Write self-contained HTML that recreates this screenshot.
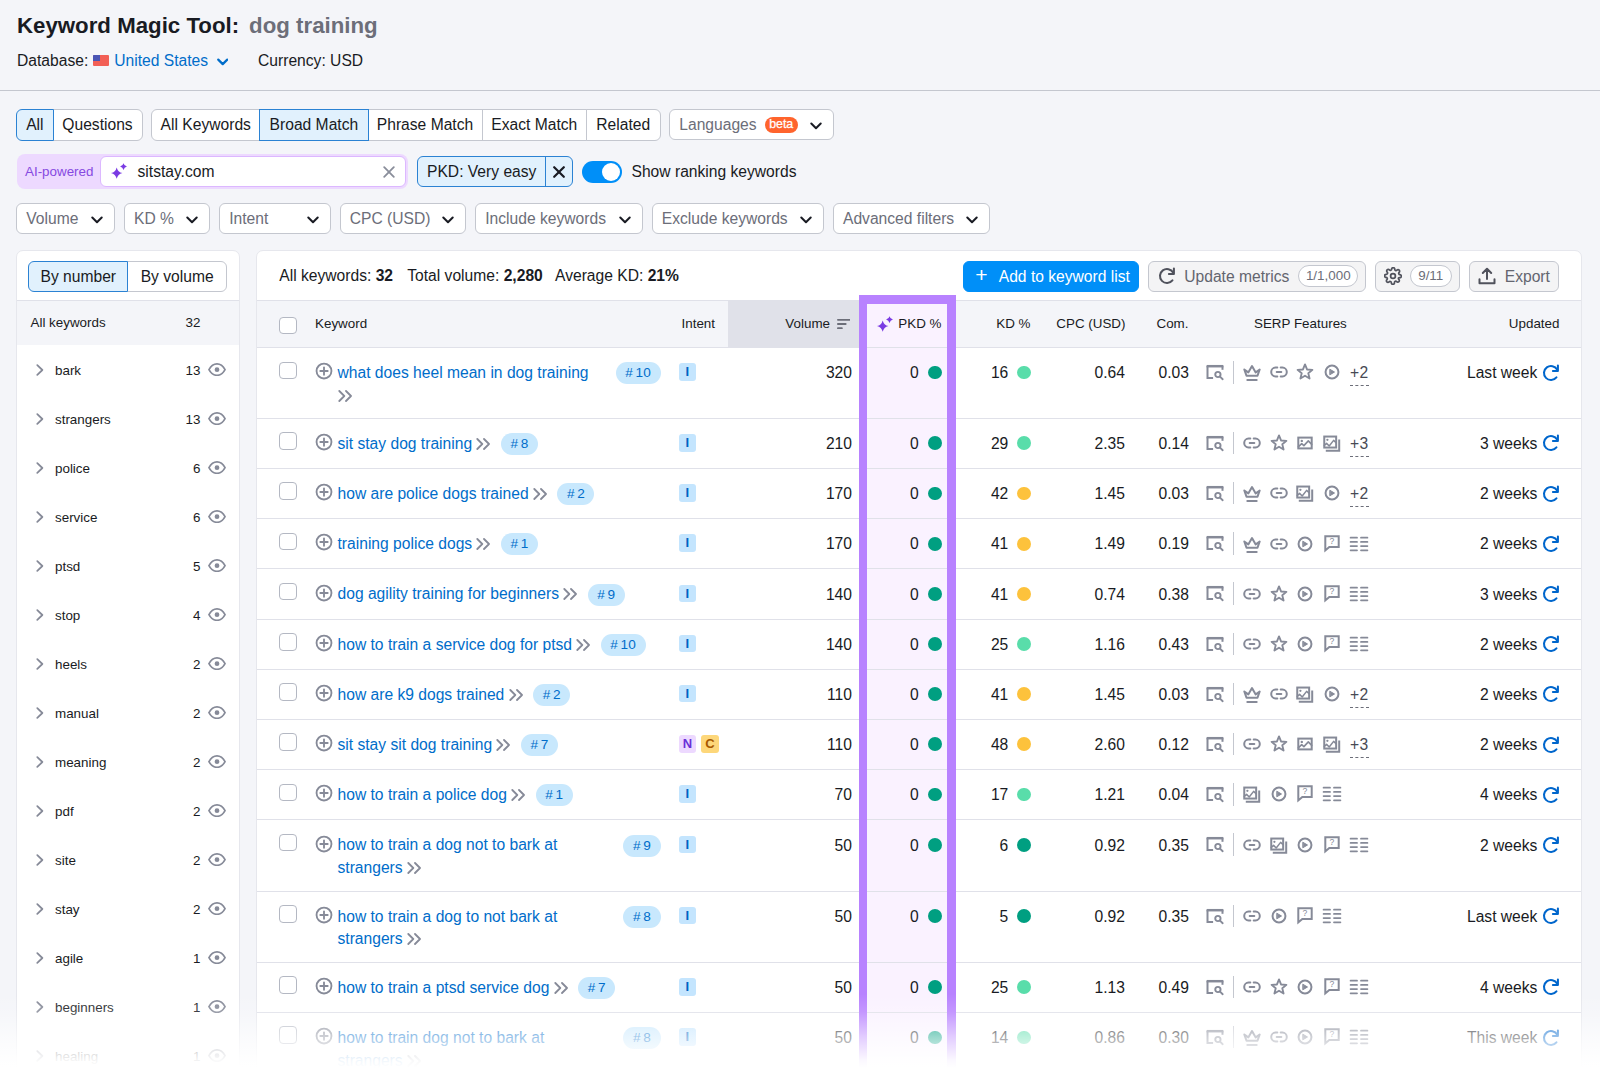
<!DOCTYPE html>
<html lang="en"><head><meta charset="utf-8"><title>Keyword Magic Tool: dog training</title>
<style>
*{box-sizing:border-box;margin:0;padding:0}
html,body{width:1600px;height:1070px;overflow:hidden}
body{background:#f4f5f9;font-family:"Liberation Sans",Arial,sans-serif;color:#191b23;font-size:15.63px;position:relative}
svg{display:block}
.abs{position:absolute}
h1{position:absolute;left:17px;top:13.25px;font-size:22.25px;line-height:26px;font-weight:700;letter-spacing:0;white-space:nowrap}
h1 span{color:#6c6e79;margin-left:10px}
.db{position:absolute;left:17px;top:50px;height:22px;line-height:22px;font-size:15.63px;white-space:nowrap;display:flex;align-items:center}
.db .flag{display:inline-block;width:16px;height:11px;margin:-1px 4.75px 0 5.25px;position:relative;background:#f25f56;border-radius:1px;overflow:hidden}
.db .flag:before{content:"";position:absolute;left:0;top:0;width:7px;height:6px;background:#4a55b5}
.db a{color:#006dca}
.db .cd{margin-left:8.5px;margin-top:1px;width:11.5px}
.db .cd path{stroke-width:2.3}
.db .cur{margin-left:30px}
.hr{position:absolute;left:0;top:90px;width:1600px;height:1px;background:#c4c7cf}
.seg{position:absolute;top:109.25px;height:31.25px;display:flex}
.seg div{height:31.25px;line-height:29.5px;text-align:center;border:1px solid #c4c7cf;background:#fff;white-space:nowrap;margin-left:-1px;position:relative}
.seg div:first-child{border-radius:6px 0 0 6px;margin-left:0}
.seg div:last-child{border-radius:0 6px 6px 0}
.seg div.on{background:#e1f1fd;border-color:#2b82d3;z-index:2}
.dd{position:absolute;height:31px;background:#fff;border:1px solid #c4c7cf;border-radius:6px;color:#6c6e79;line-height:29px;padding-left:9px;white-space:nowrap}
.dd .cd{position:absolute;right:11px;top:12px}
.ai{position:absolute;left:16.5px;top:153.75px;width:391px;height:35.25px;border-radius:8px;background:#edd9ff}
.ai .lbl{position:absolute;left:8.5px;top:0;line-height:35.5px;font-size:13.4px;color:#8649e1}
.ai .inp{position:absolute;left:83.5px;top:2.5px;width:305.5px;height:30.5px;background:#fff;border:1px solid #dcb8ff;border-radius:6px}
.ai .inp .spk{position:absolute;left:10.4px;top:5.9px}
.ai .inp .t{position:absolute;left:36.5px;top:0;line-height:29px}
.ai .inp .x{position:absolute;right:10px;top:8.5px}
.chip{position:absolute;left:417px;top:156.25px;width:156px;height:30.5px;border:1px solid #2b82d3;border-radius:6px;background:#e1f1fd;line-height:30px;padding-left:9px;white-space:nowrap}
.chip .sep{position:absolute;left:126.5px;top:0;width:1px;height:28.5px;background:#2b82d3}
.chip .x{position:absolute;left:135px;top:8.5px}
.tog{position:absolute;left:582px;top:160.5px;width:40px;height:22px;border-radius:11px;background:#008ff8}
.tog:after{content:"";position:absolute;right:2px;top:2px;width:18px;height:18px;border-radius:9px;background:#fff}
.togl{position:absolute;left:631.5px;top:160.75px;line-height:22px;white-space:nowrap}
.panel{position:absolute;top:250px;background:#fff;border:1px solid #e6e7ed;border-radius:7px 7px 0 0;height:830px;overflow:hidden}
#left{left:16px;width:223.5px}
#right{left:256px;width:1326px}
.seg2{position:absolute;left:11.25px;top:9.5px;height:31px;display:flex}
.seg2 div{height:31px;line-height:30px;text-align:center;border:1px solid #c4c7cf;background:#fff;white-space:nowrap;margin-left:-1px;position:relative;border-radius:0 6px 6px 0}
.seg2 div.on{background:#e1f1fd;border-color:#2b82d3;z-index:2;border-radius:6px 0 0 6px;margin-left:0}
.sep-h{position:absolute;left:0;right:0;top:48.5px;height:1px;background:#e0e1e9}
.allk{position:absolute;left:0;right:0;top:49.5px;height:44.5px;background:#f4f5f9;font-size:13.4px;line-height:43.5px}
.allk .a{position:absolute;left:13.5px;top:0}
.allk .b{position:absolute;right:38px;top:0}
.si{position:absolute;left:0;right:0;height:49px;font-size:13.4px;line-height:49px}
.si .chv{position:absolute;left:18.5px;top:18px}
.si .nm{position:absolute;left:38px;top:0}
.si .ct{position:absolute;right:38px;top:0}
.si .eye{position:absolute;left:190.5px;top:17.5px}
.tb{position:absolute;left:0;right:0;top:0;height:48.5px}
.tb .st{position:absolute;top:14.25px;line-height:22px;white-space:nowrap}
.btn{position:absolute;top:9.5px;height:31px;border-radius:6px;border:1px solid #c4c7cf;background:#f4f4f5;color:#63656f;white-space:nowrap;line-height:29px}
.btn.pri{background:#008ff8;border-color:#008ff8;color:#fff}
.pill{position:absolute;top:3px;height:22.5px;border:1px solid #c4c7cf;border-radius:11.5px;background:#fff;font-size:13.4px;line-height:20.5px;text-align:center;color:#6c6e79}
.th{position:absolute;left:0;right:0;top:49.5px;height:47.5px;background:#f4f5f9;border-bottom:1px solid #e0e1e9}
.thl{position:absolute;left:0;right:0;top:49.5px;height:46.5px;font-size:13.4px;line-height:46.5px}
.thl .c{position:absolute;top:0;white-space:nowrap}
.volbg{position:absolute;left:471px;top:0;width:131px;height:46.5px;background:#e0e1e9}
.pkcol{position:absolute;left:602px;top:44px;width:97px;height:800px;background:#faf2ff}
.pkcol i{position:absolute;left:0;right:0;top:52px;height:1px;background:#e0e1e9}
.cb{position:absolute;left:22.25px;width:17.5px;height:17.5px;border:1px solid #b4b8c3;border-radius:4px;background:#fff}
.tr{position:absolute;left:0;right:0;border-bottom:1px solid #e0e1e9}
.tr .cb{top:13.5px}
.tr .pc{position:absolute;left:56.6px;top:13.3px}
.kw{position:absolute;left:80.5px;top:14.1px;width:323px;display:flex;align-items:flex-start;line-height:22.75px;white-space:nowrap}
.kw a{color:#006dca}
.kw .dbl{display:inline-block;vertical-align:-1px;margin-left:0}
.pos{display:inline-block;margin-left:9.5px;margin-top:.2px;height:22px;line-height:22.5px;padding:0 9.5px;border-radius:11px;background:#c8e8fd;color:#006dca;font-size:13.6px;letter-spacing:.2px}
.pos i{display:inline-block;width:2.5px}
.pos.right{margin-left:auto}
.ints{position:absolute;left:421.6px;top:15.3px;display:flex;gap:5px}
.int{display:block;width:17.5px;height:17.5px;border-radius:3px;font-size:13px;font-weight:700;line-height:17.5px;text-align:center}
.int-I{background:#c4e5fe;color:#0062c4}
.int-N{background:#edd9ff;color:#6a30d8}
.int-C{background:#fdd77a;color:#a75800}
.num{position:absolute;top:14.3px;line-height:22.75px;text-align:right;white-space:nowrap}
.vol{right:729px} .pkd{right:662.2px} .kd{right:572.7px} .cpc{right:456px} .com{right:392px}
.dot{position:absolute;top:17.6px;width:13.8px;height:13.8px;border-radius:7px}
.sic0{position:absolute;left:948px;top:14.1px}
.vdiv{position:absolute;left:976px;top:13px;width:1px;height:22.5px;background:#c4c7cf}
.sics{position:absolute;left:981.5px;top:14.4px;height:20px;display:flex;align-items:center}
.sic{display:flex;width:26.75px;justify-content:center}
.more{align-self:flex-start;margin-left:4.5px;margin-top:-.1px;color:#484a54;line-height:22.75px;height:22.75px;position:relative;letter-spacing:.4px}
.more:after{content:"";position:absolute;left:0;right:0;top:23px;border-top:1px dashed #6c6e79}
.upd{position:absolute;right:20.4px;top:14.3px;line-height:22.75px;white-space:nowrap;display:flex;align-items:center}
.rf{margin-left:3.3px;position:relative;top:-1px}
#pk i{position:absolute;background:#b882ff}
#fade{position:absolute;left:0;top:990px;width:1600px;height:80px;background:linear-gradient(to bottom,rgba(255,255,255,0) 4px,rgba(255,255,255,.17) 22px,rgba(255,255,255,.6) 47px,rgba(255,255,255,.94) 70px,#fff 78px)}
</style></head><body>
<h1>Keyword Magic Tool:<span>dog training</span></h1>
<div class="db">Database:<span class="flag"></span><a>United States</a><svg width="12" height="8" viewBox="0 0 12 8" fill="none" class="cd"><path d="M1.3 1.5 L6 6.2 L10.7 1.5" stroke="#006dca" stroke-width="2" stroke-linecap="round" stroke-linejoin="round"/></svg><span class="cur">Currency: USD</span></div>
<div class="hr"></div>

<div class="seg" style="left:16.25px"><div class="on" style="width:37.25px">All</div><div style="width:90px">Questions</div></div>
<div class="seg" style="left:151.25px"><div style="width:109px">All Keywords</div><div class="on" style="width:109.25px">Broad Match</div><div style="width:115px">Phrase Match</div><div style="width:105.5px">Exact Match</div><div style="width:74.5px">Related</div></div>
<div class="dd" style="left:669.25px;top:109px;width:164.5px"><span>Languages</span><span class="abs" style="left:94.4px;top:7.25px;height:15.5px;line-height:15px;padding:0 4.5px;border-radius:8px;background:#ff642d;color:#fff;font-size:12.4px;-webkit-text-stroke:.25px #fff">beta</span><svg width="12" height="8" viewBox="0 0 12 8" fill="none" class="cd"><path d="M1.3 1.5 L6 6.2 L10.7 1.5" stroke="#191b23" stroke-width="2" stroke-linecap="round" stroke-linejoin="round"/></svg></div>

<div class="ai"><span class="lbl">AI-powered</span><div class="inp"><svg width="16" height="16" viewBox="0 0 16 16" fill="none" class="spk"><path d="M5.7 4.3999999999999995 Q6.84 8.959999999999999 11.4 10.1 Q6.84 11.24 5.7 15.8 Q4.5600000000000005 11.24 0.0 10.1 Q4.5600000000000005 8.959999999999999 5.7 4.3999999999999995 Z" fill="#7a3be3"/><path d="M12.5 0.20000000000000018 Q13.18 2.92 15.9 3.6 Q13.18 4.28 12.5 7.0 Q11.82 4.28 9.1 3.6 Q11.82 2.92 12.5 0.20000000000000018 Z" fill="#7a3be3"/></svg><span class="t">sitstay.com</span><span class="x"><svg width="12" height="12" viewBox="0 0 12 12" fill="none" ><path d="M1.2 1.2 L10.8 10.8 M10.8 1.2 L1.2 10.8" stroke="#8a8e9b" stroke-width="1.8" stroke-linecap="round"/></svg></span></div></div>
<div class="chip">PKD: Very easy<span class="sep"></span><span class="x"><svg width="12" height="12" viewBox="0 0 12 12" fill="none" ><path d="M1.2 1.2 L10.8 10.8 M10.8 1.2 L1.2 10.8" stroke="#191b23" stroke-width="2.2" stroke-linecap="round"/></svg></span></div>
<div class="tog"></div><div class="togl">Show ranking keywords</div>

<div style="position:absolute;left:0;top:203px">
<div class="dd" style="left:16.25px;width:98.25px"><span>Volume</span><svg width="12" height="8" viewBox="0 0 12 8" fill="none" class="cd"><path d="M1.3 1.5 L6 6.2 L10.7 1.5" stroke="#191b23" stroke-width="2" stroke-linecap="round" stroke-linejoin="round"/></svg></div><div class="dd" style="left:124px;width:86px"><span>KD %</span><svg width="12" height="8" viewBox="0 0 12 8" fill="none" class="cd"><path d="M1.3 1.5 L6 6.2 L10.7 1.5" stroke="#191b23" stroke-width="2" stroke-linecap="round" stroke-linejoin="round"/></svg></div><div class="dd" style="left:219.25px;width:111.25px"><span>Intent</span><svg width="12" height="8" viewBox="0 0 12 8" fill="none" class="cd"><path d="M1.3 1.5 L6 6.2 L10.7 1.5" stroke="#191b23" stroke-width="2" stroke-linecap="round" stroke-linejoin="round"/></svg></div><div class="dd" style="left:339.75px;width:126.5px"><span>CPC (USD)</span><svg width="12" height="8" viewBox="0 0 12 8" fill="none" class="cd"><path d="M1.3 1.5 L6 6.2 L10.7 1.5" stroke="#191b23" stroke-width="2" stroke-linecap="round" stroke-linejoin="round"/></svg></div><div class="dd" style="left:475.25px;width:167.25px"><span>Include keywords</span><svg width="12" height="8" viewBox="0 0 12 8" fill="none" class="cd"><path d="M1.3 1.5 L6 6.2 L10.7 1.5" stroke="#191b23" stroke-width="2" stroke-linecap="round" stroke-linejoin="round"/></svg></div><div class="dd" style="left:651.75px;width:172px"><span>Exclude keywords</span><svg width="12" height="8" viewBox="0 0 12 8" fill="none" class="cd"><path d="M1.3 1.5 L6 6.2 L10.7 1.5" stroke="#191b23" stroke-width="2" stroke-linecap="round" stroke-linejoin="round"/></svg></div><div class="dd" style="left:833px;width:157.25px"><span>Advanced filters</span><svg width="12" height="8" viewBox="0 0 12 8" fill="none" class="cd"><path d="M1.3 1.5 L6 6.2 L10.7 1.5" stroke="#191b23" stroke-width="2" stroke-linecap="round" stroke-linejoin="round"/></svg></div>
</div>

<div class="panel" id="left">
<div class="seg2"><div class="on" style="width:100px">By number</div><div style="width:99.75px">By volume</div></div>
<div class="sep-h"></div>
<div class="allk"><span class="a">All keywords</span><span class="b">32</span></div>
<div class="si" style="top:94.5px"><span class="chv"><svg width="8.3" height="12" viewBox="0 0 9 13" fill="none" ><path d="M1.4 1.2 L6.9 6.5 L1.4 11.8" stroke="#868a98" stroke-width="1.9" stroke-linecap="round" stroke-linejoin="round"/></svg></span><span class="nm">bark</span><span class="ct">13</span><span class="eye"><svg width="18" height="13.3" viewBox="0 0 19 14" fill="none" ><path d="M1 7 C3.2 3 6.3 1 9.5 1 C12.7 1 15.8 3 18 7 C15.8 11 12.7 13 9.5 13 C6.3 13 3.2 11 1 7 Z" stroke="#868a98" stroke-width="1.8" stroke-linejoin="round"/><circle cx="9.5" cy="7" r="2.5" fill="#868a98"/></svg></span></div>
<div class="si" style="top:143.5px"><span class="chv"><svg width="8.3" height="12" viewBox="0 0 9 13" fill="none" ><path d="M1.4 1.2 L6.9 6.5 L1.4 11.8" stroke="#868a98" stroke-width="1.9" stroke-linecap="round" stroke-linejoin="round"/></svg></span><span class="nm">strangers</span><span class="ct">13</span><span class="eye"><svg width="18" height="13.3" viewBox="0 0 19 14" fill="none" ><path d="M1 7 C3.2 3 6.3 1 9.5 1 C12.7 1 15.8 3 18 7 C15.8 11 12.7 13 9.5 13 C6.3 13 3.2 11 1 7 Z" stroke="#868a98" stroke-width="1.8" stroke-linejoin="round"/><circle cx="9.5" cy="7" r="2.5" fill="#868a98"/></svg></span></div>
<div class="si" style="top:192.5px"><span class="chv"><svg width="8.3" height="12" viewBox="0 0 9 13" fill="none" ><path d="M1.4 1.2 L6.9 6.5 L1.4 11.8" stroke="#868a98" stroke-width="1.9" stroke-linecap="round" stroke-linejoin="round"/></svg></span><span class="nm">police</span><span class="ct">6</span><span class="eye"><svg width="18" height="13.3" viewBox="0 0 19 14" fill="none" ><path d="M1 7 C3.2 3 6.3 1 9.5 1 C12.7 1 15.8 3 18 7 C15.8 11 12.7 13 9.5 13 C6.3 13 3.2 11 1 7 Z" stroke="#868a98" stroke-width="1.8" stroke-linejoin="round"/><circle cx="9.5" cy="7" r="2.5" fill="#868a98"/></svg></span></div>
<div class="si" style="top:241.5px"><span class="chv"><svg width="8.3" height="12" viewBox="0 0 9 13" fill="none" ><path d="M1.4 1.2 L6.9 6.5 L1.4 11.8" stroke="#868a98" stroke-width="1.9" stroke-linecap="round" stroke-linejoin="round"/></svg></span><span class="nm">service</span><span class="ct">6</span><span class="eye"><svg width="18" height="13.3" viewBox="0 0 19 14" fill="none" ><path d="M1 7 C3.2 3 6.3 1 9.5 1 C12.7 1 15.8 3 18 7 C15.8 11 12.7 13 9.5 13 C6.3 13 3.2 11 1 7 Z" stroke="#868a98" stroke-width="1.8" stroke-linejoin="round"/><circle cx="9.5" cy="7" r="2.5" fill="#868a98"/></svg></span></div>
<div class="si" style="top:290.5px"><span class="chv"><svg width="8.3" height="12" viewBox="0 0 9 13" fill="none" ><path d="M1.4 1.2 L6.9 6.5 L1.4 11.8" stroke="#868a98" stroke-width="1.9" stroke-linecap="round" stroke-linejoin="round"/></svg></span><span class="nm">ptsd</span><span class="ct">5</span><span class="eye"><svg width="18" height="13.3" viewBox="0 0 19 14" fill="none" ><path d="M1 7 C3.2 3 6.3 1 9.5 1 C12.7 1 15.8 3 18 7 C15.8 11 12.7 13 9.5 13 C6.3 13 3.2 11 1 7 Z" stroke="#868a98" stroke-width="1.8" stroke-linejoin="round"/><circle cx="9.5" cy="7" r="2.5" fill="#868a98"/></svg></span></div>
<div class="si" style="top:339.5px"><span class="chv"><svg width="8.3" height="12" viewBox="0 0 9 13" fill="none" ><path d="M1.4 1.2 L6.9 6.5 L1.4 11.8" stroke="#868a98" stroke-width="1.9" stroke-linecap="round" stroke-linejoin="round"/></svg></span><span class="nm">stop</span><span class="ct">4</span><span class="eye"><svg width="18" height="13.3" viewBox="0 0 19 14" fill="none" ><path d="M1 7 C3.2 3 6.3 1 9.5 1 C12.7 1 15.8 3 18 7 C15.8 11 12.7 13 9.5 13 C6.3 13 3.2 11 1 7 Z" stroke="#868a98" stroke-width="1.8" stroke-linejoin="round"/><circle cx="9.5" cy="7" r="2.5" fill="#868a98"/></svg></span></div>
<div class="si" style="top:388.5px"><span class="chv"><svg width="8.3" height="12" viewBox="0 0 9 13" fill="none" ><path d="M1.4 1.2 L6.9 6.5 L1.4 11.8" stroke="#868a98" stroke-width="1.9" stroke-linecap="round" stroke-linejoin="round"/></svg></span><span class="nm">heels</span><span class="ct">2</span><span class="eye"><svg width="18" height="13.3" viewBox="0 0 19 14" fill="none" ><path d="M1 7 C3.2 3 6.3 1 9.5 1 C12.7 1 15.8 3 18 7 C15.8 11 12.7 13 9.5 13 C6.3 13 3.2 11 1 7 Z" stroke="#868a98" stroke-width="1.8" stroke-linejoin="round"/><circle cx="9.5" cy="7" r="2.5" fill="#868a98"/></svg></span></div>
<div class="si" style="top:437.5px"><span class="chv"><svg width="8.3" height="12" viewBox="0 0 9 13" fill="none" ><path d="M1.4 1.2 L6.9 6.5 L1.4 11.8" stroke="#868a98" stroke-width="1.9" stroke-linecap="round" stroke-linejoin="round"/></svg></span><span class="nm">manual</span><span class="ct">2</span><span class="eye"><svg width="18" height="13.3" viewBox="0 0 19 14" fill="none" ><path d="M1 7 C3.2 3 6.3 1 9.5 1 C12.7 1 15.8 3 18 7 C15.8 11 12.7 13 9.5 13 C6.3 13 3.2 11 1 7 Z" stroke="#868a98" stroke-width="1.8" stroke-linejoin="round"/><circle cx="9.5" cy="7" r="2.5" fill="#868a98"/></svg></span></div>
<div class="si" style="top:486.5px"><span class="chv"><svg width="8.3" height="12" viewBox="0 0 9 13" fill="none" ><path d="M1.4 1.2 L6.9 6.5 L1.4 11.8" stroke="#868a98" stroke-width="1.9" stroke-linecap="round" stroke-linejoin="round"/></svg></span><span class="nm">meaning</span><span class="ct">2</span><span class="eye"><svg width="18" height="13.3" viewBox="0 0 19 14" fill="none" ><path d="M1 7 C3.2 3 6.3 1 9.5 1 C12.7 1 15.8 3 18 7 C15.8 11 12.7 13 9.5 13 C6.3 13 3.2 11 1 7 Z" stroke="#868a98" stroke-width="1.8" stroke-linejoin="round"/><circle cx="9.5" cy="7" r="2.5" fill="#868a98"/></svg></span></div>
<div class="si" style="top:535.5px"><span class="chv"><svg width="8.3" height="12" viewBox="0 0 9 13" fill="none" ><path d="M1.4 1.2 L6.9 6.5 L1.4 11.8" stroke="#868a98" stroke-width="1.9" stroke-linecap="round" stroke-linejoin="round"/></svg></span><span class="nm">pdf</span><span class="ct">2</span><span class="eye"><svg width="18" height="13.3" viewBox="0 0 19 14" fill="none" ><path d="M1 7 C3.2 3 6.3 1 9.5 1 C12.7 1 15.8 3 18 7 C15.8 11 12.7 13 9.5 13 C6.3 13 3.2 11 1 7 Z" stroke="#868a98" stroke-width="1.8" stroke-linejoin="round"/><circle cx="9.5" cy="7" r="2.5" fill="#868a98"/></svg></span></div>
<div class="si" style="top:584.5px"><span class="chv"><svg width="8.3" height="12" viewBox="0 0 9 13" fill="none" ><path d="M1.4 1.2 L6.9 6.5 L1.4 11.8" stroke="#868a98" stroke-width="1.9" stroke-linecap="round" stroke-linejoin="round"/></svg></span><span class="nm">site</span><span class="ct">2</span><span class="eye"><svg width="18" height="13.3" viewBox="0 0 19 14" fill="none" ><path d="M1 7 C3.2 3 6.3 1 9.5 1 C12.7 1 15.8 3 18 7 C15.8 11 12.7 13 9.5 13 C6.3 13 3.2 11 1 7 Z" stroke="#868a98" stroke-width="1.8" stroke-linejoin="round"/><circle cx="9.5" cy="7" r="2.5" fill="#868a98"/></svg></span></div>
<div class="si" style="top:633.5px"><span class="chv"><svg width="8.3" height="12" viewBox="0 0 9 13" fill="none" ><path d="M1.4 1.2 L6.9 6.5 L1.4 11.8" stroke="#868a98" stroke-width="1.9" stroke-linecap="round" stroke-linejoin="round"/></svg></span><span class="nm">stay</span><span class="ct">2</span><span class="eye"><svg width="18" height="13.3" viewBox="0 0 19 14" fill="none" ><path d="M1 7 C3.2 3 6.3 1 9.5 1 C12.7 1 15.8 3 18 7 C15.8 11 12.7 13 9.5 13 C6.3 13 3.2 11 1 7 Z" stroke="#868a98" stroke-width="1.8" stroke-linejoin="round"/><circle cx="9.5" cy="7" r="2.5" fill="#868a98"/></svg></span></div>
<div class="si" style="top:682.5px"><span class="chv"><svg width="8.3" height="12" viewBox="0 0 9 13" fill="none" ><path d="M1.4 1.2 L6.9 6.5 L1.4 11.8" stroke="#868a98" stroke-width="1.9" stroke-linecap="round" stroke-linejoin="round"/></svg></span><span class="nm">agile</span><span class="ct">1</span><span class="eye"><svg width="18" height="13.3" viewBox="0 0 19 14" fill="none" ><path d="M1 7 C3.2 3 6.3 1 9.5 1 C12.7 1 15.8 3 18 7 C15.8 11 12.7 13 9.5 13 C6.3 13 3.2 11 1 7 Z" stroke="#868a98" stroke-width="1.8" stroke-linejoin="round"/><circle cx="9.5" cy="7" r="2.5" fill="#868a98"/></svg></span></div>
<div class="si" style="top:731.5px"><span class="chv"><svg width="8.3" height="12" viewBox="0 0 9 13" fill="none" ><path d="M1.4 1.2 L6.9 6.5 L1.4 11.8" stroke="#868a98" stroke-width="1.9" stroke-linecap="round" stroke-linejoin="round"/></svg></span><span class="nm">beginners</span><span class="ct">1</span><span class="eye"><svg width="18" height="13.3" viewBox="0 0 19 14" fill="none" ><path d="M1 7 C3.2 3 6.3 1 9.5 1 C12.7 1 15.8 3 18 7 C15.8 11 12.7 13 9.5 13 C6.3 13 3.2 11 1 7 Z" stroke="#868a98" stroke-width="1.8" stroke-linejoin="round"/><circle cx="9.5" cy="7" r="2.5" fill="#868a98"/></svg></span></div>
<div class="si" style="top:780.5px"><span class="chv"><svg width="8.3" height="12" viewBox="0 0 9 13" fill="none" ><path d="M1.4 1.2 L6.9 6.5 L1.4 11.8" stroke="#868a98" stroke-width="1.9" stroke-linecap="round" stroke-linejoin="round"/></svg></span><span class="nm">healing</span><span class="ct">1</span><span class="eye"><svg width="18" height="13.3" viewBox="0 0 19 14" fill="none" ><path d="M1 7 C3.2 3 6.3 1 9.5 1 C12.7 1 15.8 3 18 7 C15.8 11 12.7 13 9.5 13 C6.3 13 3.2 11 1 7 Z" stroke="#868a98" stroke-width="1.8" stroke-linejoin="round"/><circle cx="9.5" cy="7" r="2.5" fill="#868a98"/></svg></span></div>
</div>

<div class="panel" id="right">
<div class="tb">
<span class="st" style="left:22.25px">All keywords: <b>32</b></span>
<span class="st" style="left:150.25px">Total volume: <b>2,280</b></span>
<span class="st" style="left:298px">Average KD: <b>21%</b></span>
<div class="btn pri" style="left:706.25px;width:176px"><span class="abs" style="left:11px;top:-1.5px;font-size:21px;font-weight:400">+</span><span class="abs" style="left:34.5px">Add to keyword list</span></div>
<div class="btn" style="left:891.25px;width:217.5px"><span class="abs" style="left:7.25px;top:4.25px"><svg width="20" height="20" viewBox="-10 -10 20 20" fill="none" stroke="#50525c" stroke-width="2.05" stroke-linecap="round" stroke-linejoin="round"><path d="M5.44 4.4 A7 7 0 1 1 6.1 -3.4"/><path d="M6.9 -7.5 V-2.1 H1.9"/></svg></span><span class="abs" style="left:35px">Update metrics</span><span class="pill" style="left:149px;width:60px">1/1,000</span></div>
<div class="btn" style="left:1118px;width:84.5px"><span class="abs" style="left:7.75px;top:5.5px"><svg width="18" height="18" viewBox="0 0 24 24" fill="none"><path d="M12 15.2a3.2 3.2 0 1 0 0-6.400a3.2 3.2 0 0 0 0 6.400z" stroke="#50525c" stroke-width="2.3"/><path d="M19.4 14.6a1.700 1.700 0 0 0 .34 1.870l.06.06a2.060 2.060 0 1 1-2.910 2.910l-.06-.06a1.700 1.700 0 0 0-1.870-.34 1.700 1.700 0 0 0-1.030 1.550V21a2.060 2.060 0 1 1-4.110 0v-.09a1.700 1.700 0 0 0-1.110-1.550 1.700 1.700 0 0 0-1.870.34l-.06.06a2.060 2.060 0 1 1-2.910-2.910l.06-.06a1.700 1.700 0 0 0 .34-1.870 1.700 1.700 0 0 0-1.550-1.030H3a2.060 2.060 0 1 1 0-4.110h.09a1.700 1.700 0 0 0 1.550-1.110 1.700 1.700 0 0 0-.34-1.870l-.06-.06a2.060 2.060 0 1 1 2.910-2.910l.06.06a1.700 1.700 0 0 0 1.870.34h.08a1.700 1.700 0 0 0 1.030-1.550V3a2.060 2.060 0 1 1 4.110 0v.09a1.700 1.700 0 0 0 1.030 1.550 1.700 1.700 0 0 0 1.870-.34l.06-.06a2.060 2.060 0 1 1 2.910 2.910l-.06.06a1.700 1.700 0 0 0-.34 1.870v.08a1.700 1.700 0 0 0 1.550 1.030H21a2.060 2.060 0 1 1 0 4.110h-.09a1.700 1.700 0 0 0-1.550 1.030z" stroke="#50525c" stroke-width="2.3" stroke-linejoin="round"/></svg></span><span class="pill" style="left:34px;width:41.5px">9/11</span></div>
<div class="btn" style="left:1212.25px;width:90px"><span class="abs" style="left:8px;top:5px"><svg width="18" height="18" viewBox="0 0 18 18" fill="none" ><path d="M1.5 12.2 V16.2 H16.5 V12.2" stroke="#50525c" stroke-width="2" stroke-linejoin="round" stroke-linecap="round"/><path d="M9 12 V2 M4.8 6 L9 1.8 L13.2 6" stroke="#50525c" stroke-width="2" stroke-linejoin="round" stroke-linecap="round"/></svg></span><span class="abs" style="left:34.5px">Export</span></div>
</div>
<div class="sep-h"></div>
<div class="th"><div class="volbg"></div></div>
<div class="pkcol"><i></i></div>
<div class="thl">
<span class="cb" style="top:16.25px"></span>
<span class="c" style="left:58px">Keyword</span>
<span class="c" style="left:424.5px">Intent</span>
<span class="c" style="right:751px">Volume</span><span class="abs" style="left:579.6px;top:17.5px"><svg width="13.6" height="12" viewBox="0 0 15 12" fill="none" ><path d="M1 1.4 H14 M1 6 H9.6 M1 10.6 H5.4" stroke="#6c6e79" stroke-width="2" stroke-linecap="round"/></svg></span>
<span class="c" style="right:639.5px">PKD %</span><span class="abs" style="left:619.5px;top:15.5px"><svg width="16" height="16" viewBox="0 0 16 16" fill="none" class="spk"><path d="M5.7 4.3999999999999995 Q6.84 8.959999999999999 11.4 10.1 Q6.84 11.24 5.7 15.8 Q4.5600000000000005 11.24 0.0 10.1 Q4.5600000000000005 8.959999999999999 5.7 4.3999999999999995 Z" fill="#7a3be3"/><path d="M12.5 0.20000000000000018 Q13.18 2.92 15.9 3.6 Q13.18 4.28 12.5 7.0 Q11.82 4.28 9.1 3.6 Q11.82 2.92 12.5 0.20000000000000018 Z" fill="#7a3be3"/></svg></span>
<span class="c" style="right:550.5px">KD %</span>
<span class="c" style="right:455.5px">CPC (USD)</span>
<span class="c" style="right:392.5px">Com.</span>
<span class="c" style="left:997px">SERP Features</span>
<span class="c" style="right:21.5px">Updated</span>
</div>
<div class="tr" style="top:97.0px;height:70.75px">
<span class="cb"></span><span class="pc"><svg width="20" height="20" viewBox="-10 -10 20 20" fill="none" stroke="#868a98" stroke-width="2.0" stroke-linecap="round" stroke-linejoin="round"><circle cx="0" cy="0" r="7.45" stroke-width="1.85"/><path d="M0 -3.7 V3.7 M-3.7 0 H3.7" stroke-width="1.85"/></svg></span>
<div class="kw"><a>what does heel mean in dog training<br><svg width="15" height="12" viewBox="0 0 15 12" fill="none" class="dbl"><path d="M1.3 1 L6.3 6 L1.3 11 M8 1 L13 6 L8 11" stroke="#868a98" stroke-width="1.8" stroke-linecap="round" stroke-linejoin="round"/></svg></a><span class="pos right">#<i></i>10</span></div>
<div class="ints"><span class="int int-I">I</span></div>
<div class="num vol">320</div>
<div class="num pkd">0</div><span class="dot" style="left:671px;background:#009f81"></span>
<div class="num kd">16</div><span class="dot" style="left:759.75px;background:#59ddaa"></span>
<div class="num cpc">0.64</div>
<div class="num com">0.03</div>
<span class="sic0"><svg width="20" height="20" viewBox="-10 -10 20 20" fill="none" stroke="#868a98" stroke-width="2.0" stroke-linecap="round" stroke-linejoin="round"><path d="M-8.4 -5.8 H8.4" stroke-width="2.5" stroke-linecap="butt"/><path d="M-7.5 -5.9 V6 H-1.9" stroke-linecap="butt" stroke-linejoin="miter"/><path d="M7.5 -5.9 V-2.2" stroke-linecap="butt"/><circle cx="2.9" cy="2.5" r="2.65" stroke-width="1.9"/><path d="M5 4.6 L7.7 7.2" stroke-width="1.9"/></svg></span><span class="vdiv"></span>
<div class="sics"><span class="sic"><svg width="20" height="20" viewBox="-10 -10 20 20" fill="none" stroke="#868a98" stroke-width="2.0" stroke-linecap="round" stroke-linejoin="round"><path d="M-7.7 -2.5 L-3.7 0.4 L0 -6 L3.7 0.4 L7.7 -2.5 L5.5 3.7 H-5.5 Z"/><path d="M-4.7 7.9 H4.7"/></svg></span><span class="sic"><svg width="20" height="20" viewBox="-10 -10 20 20" fill="none" stroke="#868a98" stroke-width="2.0" stroke-linecap="round" stroke-linejoin="round"><path d="M-1.7 -4.4 H-3.4 A4.4 4.4 0 0 0 -3.4 4.4 H-1.7 M1.7 -4.4 H3.4 A4.4 4.4 0 0 1 3.4 4.4 H1.7 M-2.3 0 H2.3"/></svg></span><span class="sic"><svg width="20" height="20" viewBox="-10 -10 20 20" fill="none" stroke="#868a98" stroke-width="2.0" stroke-linecap="round" stroke-linejoin="round"><path d="M0.00 -7.55 L2.03 -2.54 L7.42 -2.16 L3.28 1.32 L4.58 6.56 L0.00 3.70 L-4.58 6.56 L-3.28 1.32 L-7.42 -2.16 L-2.03 -2.54 Z" stroke-width="1.85"/></svg></span><span class="sic"><svg width="20" height="20" viewBox="-10 -10 20 20" fill="none" stroke="#868a98" stroke-width="2.0" stroke-linecap="round" stroke-linejoin="round"><circle cx="0" cy="0" r="6.45"/><path d="M-1.9 -2.6 L2.5 0 L-1.9 2.6 Z" fill="#868a98" stroke-width="1"/></svg></span><span class="more">+2</span></div>
<div class="upd">Last week<span class="rf"><svg width="20" height="20" viewBox="-10 -10 20 20" fill="none" stroke="#0066cc" stroke-width="2.05" stroke-linecap="round" stroke-linejoin="round"><path d="M5.44 4.4 A7 7 0 1 1 6.1 -3.4"/><path d="M6.9 -7.5 V-2.1 H1.9"/></svg></span></div>
</div>
<div class="tr" style="top:167.75px;height:50.19px">
<span class="cb"></span><span class="pc"><svg width="20" height="20" viewBox="-10 -10 20 20" fill="none" stroke="#868a98" stroke-width="2.0" stroke-linecap="round" stroke-linejoin="round"><circle cx="0" cy="0" r="7.45" stroke-width="1.85"/><path d="M0 -3.7 V3.7 M-3.7 0 H3.7" stroke-width="1.85"/></svg></span>
<div class="kw"><a>sit stay dog training <svg width="15" height="12" viewBox="0 0 15 12" fill="none" class="dbl"><path d="M1.3 1 L6.3 6 L1.3 11 M8 1 L13 6 L8 11" stroke="#868a98" stroke-width="1.8" stroke-linecap="round" stroke-linejoin="round"/></svg></a><span class="pos">#<i></i>8</span></div>
<div class="ints"><span class="int int-I">I</span></div>
<div class="num vol">210</div>
<div class="num pkd">0</div><span class="dot" style="left:671px;background:#009f81"></span>
<div class="num kd">29</div><span class="dot" style="left:759.75px;background:#59ddaa"></span>
<div class="num cpc">2.35</div>
<div class="num com">0.14</div>
<span class="sic0"><svg width="20" height="20" viewBox="-10 -10 20 20" fill="none" stroke="#868a98" stroke-width="2.0" stroke-linecap="round" stroke-linejoin="round"><path d="M-8.4 -5.8 H8.4" stroke-width="2.5" stroke-linecap="butt"/><path d="M-7.5 -5.9 V6 H-1.9" stroke-linecap="butt" stroke-linejoin="miter"/><path d="M7.5 -5.9 V-2.2" stroke-linecap="butt"/><circle cx="2.9" cy="2.5" r="2.65" stroke-width="1.9"/><path d="M5 4.6 L7.7 7.2" stroke-width="1.9"/></svg></span><span class="vdiv"></span>
<div class="sics"><span class="sic"><svg width="20" height="20" viewBox="-10 -10 20 20" fill="none" stroke="#868a98" stroke-width="2.0" stroke-linecap="round" stroke-linejoin="round"><path d="M-1.7 -4.4 H-3.4 A4.4 4.4 0 0 0 -3.4 4.4 H-1.7 M1.7 -4.4 H3.4 A4.4 4.4 0 0 1 3.4 4.4 H1.7 M-2.3 0 H2.3"/></svg></span><span class="sic"><svg width="20" height="20" viewBox="-10 -10 20 20" fill="none" stroke="#868a98" stroke-width="2.0" stroke-linecap="round" stroke-linejoin="round"><path d="M0.00 -7.55 L2.03 -2.54 L7.42 -2.16 L3.28 1.32 L4.58 6.56 L0.00 3.70 L-4.58 6.56 L-3.28 1.32 L-7.42 -2.16 L-2.03 -2.54 Z" stroke-width="1.85"/></svg></span><span class="sic"><svg width="20" height="20" viewBox="-10 -10 20 20" fill="none" stroke="#868a98" stroke-width="2.0" stroke-linecap="round" stroke-linejoin="round"><rect x="-6.7" y="-5.4" width="13.4" height="10.8" stroke-linejoin="miter"/><circle cx="-3.2" cy="-2.1" r="1.2" fill="#868a98" stroke="none"/><path d="M-6.7 3.8 L-3.3 0.6 L-1.1 2.6 L3.3 -2.1 L6.7 1.4" stroke-width="1.6"/></svg></span><span class="sic"><svg width="20" height="20" viewBox="-10 -10 20 20" fill="none" stroke="#868a98" stroke-width="2.0" stroke-linecap="round" stroke-linejoin="round"><g transform="translate(0 0.8)"><rect x="-7.75" y="-7.25" width="11.9" height="11" stroke-linejoin="miter"/><path d="M7.2 -4.3 V6.9 H-6.2" stroke-linecap="butt" stroke-linejoin="miter"/><circle cx="-4.6" cy="-4" r="1.15" fill="#868a98" stroke="none"/><path d="M-7.7 1.6 L-5.4 -0.4 L-2.8 2.2 L1.6 -3.4 L4.1 -1.2" stroke-width="1.5"/></g></svg></span><span class="more">+3</span></div>
<div class="upd">3 weeks<span class="rf"><svg width="20" height="20" viewBox="-10 -10 20 20" fill="none" stroke="#0066cc" stroke-width="2.05" stroke-linecap="round" stroke-linejoin="round"><path d="M5.44 4.4 A7 7 0 1 1 6.1 -3.4"/><path d="M6.9 -7.5 V-2.1 H1.9"/></svg></span></div>
</div>
<div class="tr" style="top:217.94px;height:50.19px">
<span class="cb"></span><span class="pc"><svg width="20" height="20" viewBox="-10 -10 20 20" fill="none" stroke="#868a98" stroke-width="2.0" stroke-linecap="round" stroke-linejoin="round"><circle cx="0" cy="0" r="7.45" stroke-width="1.85"/><path d="M0 -3.7 V3.7 M-3.7 0 H3.7" stroke-width="1.85"/></svg></span>
<div class="kw"><a>how are police dogs trained <svg width="15" height="12" viewBox="0 0 15 12" fill="none" class="dbl"><path d="M1.3 1 L6.3 6 L1.3 11 M8 1 L13 6 L8 11" stroke="#868a98" stroke-width="1.8" stroke-linecap="round" stroke-linejoin="round"/></svg></a><span class="pos">#<i></i>2</span></div>
<div class="ints"><span class="int int-I">I</span></div>
<div class="num vol">170</div>
<div class="num pkd">0</div><span class="dot" style="left:671px;background:#009f81"></span>
<div class="num kd">42</div><span class="dot" style="left:759.75px;background:#fdc23c"></span>
<div class="num cpc">1.45</div>
<div class="num com">0.03</div>
<span class="sic0"><svg width="20" height="20" viewBox="-10 -10 20 20" fill="none" stroke="#868a98" stroke-width="2.0" stroke-linecap="round" stroke-linejoin="round"><path d="M-8.4 -5.8 H8.4" stroke-width="2.5" stroke-linecap="butt"/><path d="M-7.5 -5.9 V6 H-1.9" stroke-linecap="butt" stroke-linejoin="miter"/><path d="M7.5 -5.9 V-2.2" stroke-linecap="butt"/><circle cx="2.9" cy="2.5" r="2.65" stroke-width="1.9"/><path d="M5 4.6 L7.7 7.2" stroke-width="1.9"/></svg></span><span class="vdiv"></span>
<div class="sics"><span class="sic"><svg width="20" height="20" viewBox="-10 -10 20 20" fill="none" stroke="#868a98" stroke-width="2.0" stroke-linecap="round" stroke-linejoin="round"><path d="M-7.7 -2.5 L-3.7 0.4 L0 -6 L3.7 0.4 L7.7 -2.5 L5.5 3.7 H-5.5 Z"/><path d="M-4.7 7.9 H4.7"/></svg></span><span class="sic"><svg width="20" height="20" viewBox="-10 -10 20 20" fill="none" stroke="#868a98" stroke-width="2.0" stroke-linecap="round" stroke-linejoin="round"><path d="M-1.7 -4.4 H-3.4 A4.4 4.4 0 0 0 -3.4 4.4 H-1.7 M1.7 -4.4 H3.4 A4.4 4.4 0 0 1 3.4 4.4 H1.7 M-2.3 0 H2.3"/></svg></span><span class="sic"><svg width="20" height="20" viewBox="-10 -10 20 20" fill="none" stroke="#868a98" stroke-width="2.0" stroke-linecap="round" stroke-linejoin="round"><g transform="translate(0 0.8)"><rect x="-7.75" y="-7.25" width="11.9" height="11" stroke-linejoin="miter"/><path d="M7.2 -4.3 V6.9 H-6.2" stroke-linecap="butt" stroke-linejoin="miter"/><circle cx="-4.6" cy="-4" r="1.15" fill="#868a98" stroke="none"/><path d="M-7.7 1.6 L-5.4 -0.4 L-2.8 2.2 L1.6 -3.4 L4.1 -1.2" stroke-width="1.5"/></g></svg></span><span class="sic"><svg width="20" height="20" viewBox="-10 -10 20 20" fill="none" stroke="#868a98" stroke-width="2.0" stroke-linecap="round" stroke-linejoin="round"><circle cx="0" cy="0" r="6.45"/><path d="M-1.9 -2.6 L2.5 0 L-1.9 2.6 Z" fill="#868a98" stroke-width="1"/></svg></span><span class="more">+2</span></div>
<div class="upd">2 weeks<span class="rf"><svg width="20" height="20" viewBox="-10 -10 20 20" fill="none" stroke="#0066cc" stroke-width="2.05" stroke-linecap="round" stroke-linejoin="round"><path d="M5.44 4.4 A7 7 0 1 1 6.1 -3.4"/><path d="M6.9 -7.5 V-2.1 H1.9"/></svg></span></div>
</div>
<div class="tr" style="top:268.13px;height:50.19px">
<span class="cb"></span><span class="pc"><svg width="20" height="20" viewBox="-10 -10 20 20" fill="none" stroke="#868a98" stroke-width="2.0" stroke-linecap="round" stroke-linejoin="round"><circle cx="0" cy="0" r="7.45" stroke-width="1.85"/><path d="M0 -3.7 V3.7 M-3.7 0 H3.7" stroke-width="1.85"/></svg></span>
<div class="kw"><a>training police dogs <svg width="15" height="12" viewBox="0 0 15 12" fill="none" class="dbl"><path d="M1.3 1 L6.3 6 L1.3 11 M8 1 L13 6 L8 11" stroke="#868a98" stroke-width="1.8" stroke-linecap="round" stroke-linejoin="round"/></svg></a><span class="pos">#<i></i>1</span></div>
<div class="ints"><span class="int int-I">I</span></div>
<div class="num vol">170</div>
<div class="num pkd">0</div><span class="dot" style="left:671px;background:#009f81"></span>
<div class="num kd">41</div><span class="dot" style="left:759.75px;background:#fdc23c"></span>
<div class="num cpc">1.49</div>
<div class="num com">0.19</div>
<span class="sic0"><svg width="20" height="20" viewBox="-10 -10 20 20" fill="none" stroke="#868a98" stroke-width="2.0" stroke-linecap="round" stroke-linejoin="round"><path d="M-8.4 -5.8 H8.4" stroke-width="2.5" stroke-linecap="butt"/><path d="M-7.5 -5.9 V6 H-1.9" stroke-linecap="butt" stroke-linejoin="miter"/><path d="M7.5 -5.9 V-2.2" stroke-linecap="butt"/><circle cx="2.9" cy="2.5" r="2.65" stroke-width="1.9"/><path d="M5 4.6 L7.7 7.2" stroke-width="1.9"/></svg></span><span class="vdiv"></span>
<div class="sics"><span class="sic"><svg width="20" height="20" viewBox="-10 -10 20 20" fill="none" stroke="#868a98" stroke-width="2.0" stroke-linecap="round" stroke-linejoin="round"><path d="M-7.7 -2.5 L-3.7 0.4 L0 -6 L3.7 0.4 L7.7 -2.5 L5.5 3.7 H-5.5 Z"/><path d="M-4.7 7.9 H4.7"/></svg></span><span class="sic"><svg width="20" height="20" viewBox="-10 -10 20 20" fill="none" stroke="#868a98" stroke-width="2.0" stroke-linecap="round" stroke-linejoin="round"><path d="M-1.7 -4.4 H-3.4 A4.4 4.4 0 0 0 -3.4 4.4 H-1.7 M1.7 -4.4 H3.4 A4.4 4.4 0 0 1 3.4 4.4 H1.7 M-2.3 0 H2.3"/></svg></span><span class="sic"><svg width="20" height="20" viewBox="-10 -10 20 20" fill="none" stroke="#868a98" stroke-width="2.0" stroke-linecap="round" stroke-linejoin="round"><circle cx="0" cy="0" r="6.45"/><path d="M-1.9 -2.6 L2.5 0 L-1.9 2.6 Z" fill="#868a98" stroke-width="1"/></svg></span><span class="sic"><svg width="20" height="20" viewBox="-10 -10 20 20" fill="none" stroke="#868a98" stroke-width="2.0" stroke-linecap="round" stroke-linejoin="round"><path d="M-6.7 -7.85 H6.7 V2.95 H-2.7 L-6.7 6.4 Z" stroke-linejoin="miter"/><text x="0" y="0.4" font-family="Liberation Sans, sans-serif" font-size="8.6" fill="#868a98" stroke="none" text-anchor="middle">?</text></svg></span><span class="sic"><svg width="20" height="20" viewBox="-10 -10 20 20" fill="none" stroke="#868a98" stroke-width="1.8" stroke-linecap="round" stroke-linejoin="round"><path d="M-8.4 -6.3 H-2 M2 -6.3 H8.4"/><path d="M-8.4 -2.1 H-2 M2 -2.1 H8.4"/><path d="M-8.4 2.1 H-2 M2 2.1 H8.4"/><path d="M-8.4 6.3 H-2 M2 6.3 H8.4"/></svg></span></div>
<div class="upd">2 weeks<span class="rf"><svg width="20" height="20" viewBox="-10 -10 20 20" fill="none" stroke="#0066cc" stroke-width="2.05" stroke-linecap="round" stroke-linejoin="round"><path d="M5.44 4.4 A7 7 0 1 1 6.1 -3.4"/><path d="M6.9 -7.5 V-2.1 H1.9"/></svg></span></div>
</div>
<div class="tr" style="top:318.32px;height:50.19px">
<span class="cb"></span><span class="pc"><svg width="20" height="20" viewBox="-10 -10 20 20" fill="none" stroke="#868a98" stroke-width="2.0" stroke-linecap="round" stroke-linejoin="round"><circle cx="0" cy="0" r="7.45" stroke-width="1.85"/><path d="M0 -3.7 V3.7 M-3.7 0 H3.7" stroke-width="1.85"/></svg></span>
<div class="kw"><a>dog agility training for beginners <svg width="15" height="12" viewBox="0 0 15 12" fill="none" class="dbl"><path d="M1.3 1 L6.3 6 L1.3 11 M8 1 L13 6 L8 11" stroke="#868a98" stroke-width="1.8" stroke-linecap="round" stroke-linejoin="round"/></svg></a><span class="pos">#<i></i>9</span></div>
<div class="ints"><span class="int int-I">I</span></div>
<div class="num vol">140</div>
<div class="num pkd">0</div><span class="dot" style="left:671px;background:#009f81"></span>
<div class="num kd">41</div><span class="dot" style="left:759.75px;background:#fdc23c"></span>
<div class="num cpc">0.74</div>
<div class="num com">0.38</div>
<span class="sic0"><svg width="20" height="20" viewBox="-10 -10 20 20" fill="none" stroke="#868a98" stroke-width="2.0" stroke-linecap="round" stroke-linejoin="round"><path d="M-8.4 -5.8 H8.4" stroke-width="2.5" stroke-linecap="butt"/><path d="M-7.5 -5.9 V6 H-1.9" stroke-linecap="butt" stroke-linejoin="miter"/><path d="M7.5 -5.9 V-2.2" stroke-linecap="butt"/><circle cx="2.9" cy="2.5" r="2.65" stroke-width="1.9"/><path d="M5 4.6 L7.7 7.2" stroke-width="1.9"/></svg></span><span class="vdiv"></span>
<div class="sics"><span class="sic"><svg width="20" height="20" viewBox="-10 -10 20 20" fill="none" stroke="#868a98" stroke-width="2.0" stroke-linecap="round" stroke-linejoin="round"><path d="M-1.7 -4.4 H-3.4 A4.4 4.4 0 0 0 -3.4 4.4 H-1.7 M1.7 -4.4 H3.4 A4.4 4.4 0 0 1 3.4 4.4 H1.7 M-2.3 0 H2.3"/></svg></span><span class="sic"><svg width="20" height="20" viewBox="-10 -10 20 20" fill="none" stroke="#868a98" stroke-width="2.0" stroke-linecap="round" stroke-linejoin="round"><path d="M0.00 -7.55 L2.03 -2.54 L7.42 -2.16 L3.28 1.32 L4.58 6.56 L0.00 3.70 L-4.58 6.56 L-3.28 1.32 L-7.42 -2.16 L-2.03 -2.54 Z" stroke-width="1.85"/></svg></span><span class="sic"><svg width="20" height="20" viewBox="-10 -10 20 20" fill="none" stroke="#868a98" stroke-width="2.0" stroke-linecap="round" stroke-linejoin="round"><circle cx="0" cy="0" r="6.45"/><path d="M-1.9 -2.6 L2.5 0 L-1.9 2.6 Z" fill="#868a98" stroke-width="1"/></svg></span><span class="sic"><svg width="20" height="20" viewBox="-10 -10 20 20" fill="none" stroke="#868a98" stroke-width="2.0" stroke-linecap="round" stroke-linejoin="round"><path d="M-6.7 -7.85 H6.7 V2.95 H-2.7 L-6.7 6.4 Z" stroke-linejoin="miter"/><text x="0" y="0.4" font-family="Liberation Sans, sans-serif" font-size="8.6" fill="#868a98" stroke="none" text-anchor="middle">?</text></svg></span><span class="sic"><svg width="20" height="20" viewBox="-10 -10 20 20" fill="none" stroke="#868a98" stroke-width="1.8" stroke-linecap="round" stroke-linejoin="round"><path d="M-8.4 -6.3 H-2 M2 -6.3 H8.4"/><path d="M-8.4 -2.1 H-2 M2 -2.1 H8.4"/><path d="M-8.4 2.1 H-2 M2 2.1 H8.4"/><path d="M-8.4 6.3 H-2 M2 6.3 H8.4"/></svg></span></div>
<div class="upd">3 weeks<span class="rf"><svg width="20" height="20" viewBox="-10 -10 20 20" fill="none" stroke="#0066cc" stroke-width="2.05" stroke-linecap="round" stroke-linejoin="round"><path d="M5.44 4.4 A7 7 0 1 1 6.1 -3.4"/><path d="M6.9 -7.5 V-2.1 H1.9"/></svg></span></div>
</div>
<div class="tr" style="top:368.51px;height:50.19px">
<span class="cb"></span><span class="pc"><svg width="20" height="20" viewBox="-10 -10 20 20" fill="none" stroke="#868a98" stroke-width="2.0" stroke-linecap="round" stroke-linejoin="round"><circle cx="0" cy="0" r="7.45" stroke-width="1.85"/><path d="M0 -3.7 V3.7 M-3.7 0 H3.7" stroke-width="1.85"/></svg></span>
<div class="kw"><a>how to train a service dog for ptsd <svg width="15" height="12" viewBox="0 0 15 12" fill="none" class="dbl"><path d="M1.3 1 L6.3 6 L1.3 11 M8 1 L13 6 L8 11" stroke="#868a98" stroke-width="1.8" stroke-linecap="round" stroke-linejoin="round"/></svg></a><span class="pos">#<i></i>10</span></div>
<div class="ints"><span class="int int-I">I</span></div>
<div class="num vol">140</div>
<div class="num pkd">0</div><span class="dot" style="left:671px;background:#009f81"></span>
<div class="num kd">25</div><span class="dot" style="left:759.75px;background:#59ddaa"></span>
<div class="num cpc">1.16</div>
<div class="num com">0.43</div>
<span class="sic0"><svg width="20" height="20" viewBox="-10 -10 20 20" fill="none" stroke="#868a98" stroke-width="2.0" stroke-linecap="round" stroke-linejoin="round"><path d="M-8.4 -5.8 H8.4" stroke-width="2.5" stroke-linecap="butt"/><path d="M-7.5 -5.9 V6 H-1.9" stroke-linecap="butt" stroke-linejoin="miter"/><path d="M7.5 -5.9 V-2.2" stroke-linecap="butt"/><circle cx="2.9" cy="2.5" r="2.65" stroke-width="1.9"/><path d="M5 4.6 L7.7 7.2" stroke-width="1.9"/></svg></span><span class="vdiv"></span>
<div class="sics"><span class="sic"><svg width="20" height="20" viewBox="-10 -10 20 20" fill="none" stroke="#868a98" stroke-width="2.0" stroke-linecap="round" stroke-linejoin="round"><path d="M-1.7 -4.4 H-3.4 A4.4 4.4 0 0 0 -3.4 4.4 H-1.7 M1.7 -4.4 H3.4 A4.4 4.4 0 0 1 3.4 4.4 H1.7 M-2.3 0 H2.3"/></svg></span><span class="sic"><svg width="20" height="20" viewBox="-10 -10 20 20" fill="none" stroke="#868a98" stroke-width="2.0" stroke-linecap="round" stroke-linejoin="round"><path d="M0.00 -7.55 L2.03 -2.54 L7.42 -2.16 L3.28 1.32 L4.58 6.56 L0.00 3.70 L-4.58 6.56 L-3.28 1.32 L-7.42 -2.16 L-2.03 -2.54 Z" stroke-width="1.85"/></svg></span><span class="sic"><svg width="20" height="20" viewBox="-10 -10 20 20" fill="none" stroke="#868a98" stroke-width="2.0" stroke-linecap="round" stroke-linejoin="round"><circle cx="0" cy="0" r="6.45"/><path d="M-1.9 -2.6 L2.5 0 L-1.9 2.6 Z" fill="#868a98" stroke-width="1"/></svg></span><span class="sic"><svg width="20" height="20" viewBox="-10 -10 20 20" fill="none" stroke="#868a98" stroke-width="2.0" stroke-linecap="round" stroke-linejoin="round"><path d="M-6.7 -7.85 H6.7 V2.95 H-2.7 L-6.7 6.4 Z" stroke-linejoin="miter"/><text x="0" y="0.4" font-family="Liberation Sans, sans-serif" font-size="8.6" fill="#868a98" stroke="none" text-anchor="middle">?</text></svg></span><span class="sic"><svg width="20" height="20" viewBox="-10 -10 20 20" fill="none" stroke="#868a98" stroke-width="1.8" stroke-linecap="round" stroke-linejoin="round"><path d="M-8.4 -6.3 H-2 M2 -6.3 H8.4"/><path d="M-8.4 -2.1 H-2 M2 -2.1 H8.4"/><path d="M-8.4 2.1 H-2 M2 2.1 H8.4"/><path d="M-8.4 6.3 H-2 M2 6.3 H8.4"/></svg></span></div>
<div class="upd">2 weeks<span class="rf"><svg width="20" height="20" viewBox="-10 -10 20 20" fill="none" stroke="#0066cc" stroke-width="2.05" stroke-linecap="round" stroke-linejoin="round"><path d="M5.44 4.4 A7 7 0 1 1 6.1 -3.4"/><path d="M6.9 -7.5 V-2.1 H1.9"/></svg></span></div>
</div>
<div class="tr" style="top:418.7px;height:50.19px">
<span class="cb"></span><span class="pc"><svg width="20" height="20" viewBox="-10 -10 20 20" fill="none" stroke="#868a98" stroke-width="2.0" stroke-linecap="round" stroke-linejoin="round"><circle cx="0" cy="0" r="7.45" stroke-width="1.85"/><path d="M0 -3.7 V3.7 M-3.7 0 H3.7" stroke-width="1.85"/></svg></span>
<div class="kw"><a>how are k9 dogs trained <svg width="15" height="12" viewBox="0 0 15 12" fill="none" class="dbl"><path d="M1.3 1 L6.3 6 L1.3 11 M8 1 L13 6 L8 11" stroke="#868a98" stroke-width="1.8" stroke-linecap="round" stroke-linejoin="round"/></svg></a><span class="pos">#<i></i>2</span></div>
<div class="ints"><span class="int int-I">I</span></div>
<div class="num vol">110</div>
<div class="num pkd">0</div><span class="dot" style="left:671px;background:#009f81"></span>
<div class="num kd">41</div><span class="dot" style="left:759.75px;background:#fdc23c"></span>
<div class="num cpc">1.45</div>
<div class="num com">0.03</div>
<span class="sic0"><svg width="20" height="20" viewBox="-10 -10 20 20" fill="none" stroke="#868a98" stroke-width="2.0" stroke-linecap="round" stroke-linejoin="round"><path d="M-8.4 -5.8 H8.4" stroke-width="2.5" stroke-linecap="butt"/><path d="M-7.5 -5.9 V6 H-1.9" stroke-linecap="butt" stroke-linejoin="miter"/><path d="M7.5 -5.9 V-2.2" stroke-linecap="butt"/><circle cx="2.9" cy="2.5" r="2.65" stroke-width="1.9"/><path d="M5 4.6 L7.7 7.2" stroke-width="1.9"/></svg></span><span class="vdiv"></span>
<div class="sics"><span class="sic"><svg width="20" height="20" viewBox="-10 -10 20 20" fill="none" stroke="#868a98" stroke-width="2.0" stroke-linecap="round" stroke-linejoin="round"><path d="M-7.7 -2.5 L-3.7 0.4 L0 -6 L3.7 0.4 L7.7 -2.5 L5.5 3.7 H-5.5 Z"/><path d="M-4.7 7.9 H4.7"/></svg></span><span class="sic"><svg width="20" height="20" viewBox="-10 -10 20 20" fill="none" stroke="#868a98" stroke-width="2.0" stroke-linecap="round" stroke-linejoin="round"><path d="M-1.7 -4.4 H-3.4 A4.4 4.4 0 0 0 -3.4 4.4 H-1.7 M1.7 -4.4 H3.4 A4.4 4.4 0 0 1 3.4 4.4 H1.7 M-2.3 0 H2.3"/></svg></span><span class="sic"><svg width="20" height="20" viewBox="-10 -10 20 20" fill="none" stroke="#868a98" stroke-width="2.0" stroke-linecap="round" stroke-linejoin="round"><g transform="translate(0 0.8)"><rect x="-7.75" y="-7.25" width="11.9" height="11" stroke-linejoin="miter"/><path d="M7.2 -4.3 V6.9 H-6.2" stroke-linecap="butt" stroke-linejoin="miter"/><circle cx="-4.6" cy="-4" r="1.15" fill="#868a98" stroke="none"/><path d="M-7.7 1.6 L-5.4 -0.4 L-2.8 2.2 L1.6 -3.4 L4.1 -1.2" stroke-width="1.5"/></g></svg></span><span class="sic"><svg width="20" height="20" viewBox="-10 -10 20 20" fill="none" stroke="#868a98" stroke-width="2.0" stroke-linecap="round" stroke-linejoin="round"><circle cx="0" cy="0" r="6.45"/><path d="M-1.9 -2.6 L2.5 0 L-1.9 2.6 Z" fill="#868a98" stroke-width="1"/></svg></span><span class="more">+2</span></div>
<div class="upd">2 weeks<span class="rf"><svg width="20" height="20" viewBox="-10 -10 20 20" fill="none" stroke="#0066cc" stroke-width="2.05" stroke-linecap="round" stroke-linejoin="round"><path d="M5.44 4.4 A7 7 0 1 1 6.1 -3.4"/><path d="M6.9 -7.5 V-2.1 H1.9"/></svg></span></div>
</div>
<div class="tr" style="top:468.89px;height:50.19px">
<span class="cb"></span><span class="pc"><svg width="20" height="20" viewBox="-10 -10 20 20" fill="none" stroke="#868a98" stroke-width="2.0" stroke-linecap="round" stroke-linejoin="round"><circle cx="0" cy="0" r="7.45" stroke-width="1.85"/><path d="M0 -3.7 V3.7 M-3.7 0 H3.7" stroke-width="1.85"/></svg></span>
<div class="kw"><a>sit stay sit dog training <svg width="15" height="12" viewBox="0 0 15 12" fill="none" class="dbl"><path d="M1.3 1 L6.3 6 L1.3 11 M8 1 L13 6 L8 11" stroke="#868a98" stroke-width="1.8" stroke-linecap="round" stroke-linejoin="round"/></svg></a><span class="pos">#<i></i>7</span></div>
<div class="ints"><span class="int int-N">N</span><span class="int int-C">C</span></div>
<div class="num vol">110</div>
<div class="num pkd">0</div><span class="dot" style="left:671px;background:#009f81"></span>
<div class="num kd">48</div><span class="dot" style="left:759.75px;background:#fdc23c"></span>
<div class="num cpc">2.60</div>
<div class="num com">0.12</div>
<span class="sic0"><svg width="20" height="20" viewBox="-10 -10 20 20" fill="none" stroke="#868a98" stroke-width="2.0" stroke-linecap="round" stroke-linejoin="round"><path d="M-8.4 -5.8 H8.4" stroke-width="2.5" stroke-linecap="butt"/><path d="M-7.5 -5.9 V6 H-1.9" stroke-linecap="butt" stroke-linejoin="miter"/><path d="M7.5 -5.9 V-2.2" stroke-linecap="butt"/><circle cx="2.9" cy="2.5" r="2.65" stroke-width="1.9"/><path d="M5 4.6 L7.7 7.2" stroke-width="1.9"/></svg></span><span class="vdiv"></span>
<div class="sics"><span class="sic"><svg width="20" height="20" viewBox="-10 -10 20 20" fill="none" stroke="#868a98" stroke-width="2.0" stroke-linecap="round" stroke-linejoin="round"><path d="M-1.7 -4.4 H-3.4 A4.4 4.4 0 0 0 -3.4 4.4 H-1.7 M1.7 -4.4 H3.4 A4.4 4.4 0 0 1 3.4 4.4 H1.7 M-2.3 0 H2.3"/></svg></span><span class="sic"><svg width="20" height="20" viewBox="-10 -10 20 20" fill="none" stroke="#868a98" stroke-width="2.0" stroke-linecap="round" stroke-linejoin="round"><path d="M0.00 -7.55 L2.03 -2.54 L7.42 -2.16 L3.28 1.32 L4.58 6.56 L0.00 3.70 L-4.58 6.56 L-3.28 1.32 L-7.42 -2.16 L-2.03 -2.54 Z" stroke-width="1.85"/></svg></span><span class="sic"><svg width="20" height="20" viewBox="-10 -10 20 20" fill="none" stroke="#868a98" stroke-width="2.0" stroke-linecap="round" stroke-linejoin="round"><rect x="-6.7" y="-5.4" width="13.4" height="10.8" stroke-linejoin="miter"/><circle cx="-3.2" cy="-2.1" r="1.2" fill="#868a98" stroke="none"/><path d="M-6.7 3.8 L-3.3 0.6 L-1.1 2.6 L3.3 -2.1 L6.7 1.4" stroke-width="1.6"/></svg></span><span class="sic"><svg width="20" height="20" viewBox="-10 -10 20 20" fill="none" stroke="#868a98" stroke-width="2.0" stroke-linecap="round" stroke-linejoin="round"><g transform="translate(0 0.8)"><rect x="-7.75" y="-7.25" width="11.9" height="11" stroke-linejoin="miter"/><path d="M7.2 -4.3 V6.9 H-6.2" stroke-linecap="butt" stroke-linejoin="miter"/><circle cx="-4.6" cy="-4" r="1.15" fill="#868a98" stroke="none"/><path d="M-7.7 1.6 L-5.4 -0.4 L-2.8 2.2 L1.6 -3.4 L4.1 -1.2" stroke-width="1.5"/></g></svg></span><span class="more">+3</span></div>
<div class="upd">2 weeks<span class="rf"><svg width="20" height="20" viewBox="-10 -10 20 20" fill="none" stroke="#0066cc" stroke-width="2.05" stroke-linecap="round" stroke-linejoin="round"><path d="M5.44 4.4 A7 7 0 1 1 6.1 -3.4"/><path d="M6.9 -7.5 V-2.1 H1.9"/></svg></span></div>
</div>
<div class="tr" style="top:519.08px;height:50.19px">
<span class="cb"></span><span class="pc"><svg width="20" height="20" viewBox="-10 -10 20 20" fill="none" stroke="#868a98" stroke-width="2.0" stroke-linecap="round" stroke-linejoin="round"><circle cx="0" cy="0" r="7.45" stroke-width="1.85"/><path d="M0 -3.7 V3.7 M-3.7 0 H3.7" stroke-width="1.85"/></svg></span>
<div class="kw"><a>how to train a police dog <svg width="15" height="12" viewBox="0 0 15 12" fill="none" class="dbl"><path d="M1.3 1 L6.3 6 L1.3 11 M8 1 L13 6 L8 11" stroke="#868a98" stroke-width="1.8" stroke-linecap="round" stroke-linejoin="round"/></svg></a><span class="pos">#<i></i>1</span></div>
<div class="ints"><span class="int int-I">I</span></div>
<div class="num vol">70</div>
<div class="num pkd">0</div><span class="dot" style="left:671px;background:#009f81"></span>
<div class="num kd">17</div><span class="dot" style="left:759.75px;background:#59ddaa"></span>
<div class="num cpc">1.21</div>
<div class="num com">0.04</div>
<span class="sic0"><svg width="20" height="20" viewBox="-10 -10 20 20" fill="none" stroke="#868a98" stroke-width="2.0" stroke-linecap="round" stroke-linejoin="round"><path d="M-8.4 -5.8 H8.4" stroke-width="2.5" stroke-linecap="butt"/><path d="M-7.5 -5.9 V6 H-1.9" stroke-linecap="butt" stroke-linejoin="miter"/><path d="M7.5 -5.9 V-2.2" stroke-linecap="butt"/><circle cx="2.9" cy="2.5" r="2.65" stroke-width="1.9"/><path d="M5 4.6 L7.7 7.2" stroke-width="1.9"/></svg></span><span class="vdiv"></span>
<div class="sics"><span class="sic"><svg width="20" height="20" viewBox="-10 -10 20 20" fill="none" stroke="#868a98" stroke-width="2.0" stroke-linecap="round" stroke-linejoin="round"><g transform="translate(0 0.8)"><rect x="-7.75" y="-7.25" width="11.9" height="11" stroke-linejoin="miter"/><path d="M7.2 -4.3 V6.9 H-6.2" stroke-linecap="butt" stroke-linejoin="miter"/><circle cx="-4.6" cy="-4" r="1.15" fill="#868a98" stroke="none"/><path d="M-7.7 1.6 L-5.4 -0.4 L-2.8 2.2 L1.6 -3.4 L4.1 -1.2" stroke-width="1.5"/></g></svg></span><span class="sic"><svg width="20" height="20" viewBox="-10 -10 20 20" fill="none" stroke="#868a98" stroke-width="2.0" stroke-linecap="round" stroke-linejoin="round"><circle cx="0" cy="0" r="6.45"/><path d="M-1.9 -2.6 L2.5 0 L-1.9 2.6 Z" fill="#868a98" stroke-width="1"/></svg></span><span class="sic"><svg width="20" height="20" viewBox="-10 -10 20 20" fill="none" stroke="#868a98" stroke-width="2.0" stroke-linecap="round" stroke-linejoin="round"><path d="M-6.7 -7.85 H6.7 V2.95 H-2.7 L-6.7 6.4 Z" stroke-linejoin="miter"/><text x="0" y="0.4" font-family="Liberation Sans, sans-serif" font-size="8.6" fill="#868a98" stroke="none" text-anchor="middle">?</text></svg></span><span class="sic"><svg width="20" height="20" viewBox="-10 -10 20 20" fill="none" stroke="#868a98" stroke-width="1.8" stroke-linecap="round" stroke-linejoin="round"><path d="M-8.4 -6.3 H-2 M2 -6.3 H8.4"/><path d="M-8.4 -2.1 H-2 M2 -2.1 H8.4"/><path d="M-8.4 2.1 H-2 M2 2.1 H8.4"/><path d="M-8.4 6.3 H-2 M2 6.3 H8.4"/></svg></span></div>
<div class="upd">4 weeks<span class="rf"><svg width="20" height="20" viewBox="-10 -10 20 20" fill="none" stroke="#0066cc" stroke-width="2.05" stroke-linecap="round" stroke-linejoin="round"><path d="M5.44 4.4 A7 7 0 1 1 6.1 -3.4"/><path d="M6.9 -7.5 V-2.1 H1.9"/></svg></span></div>
</div>
<div class="tr" style="top:569.27px;height:71.25px">
<span class="cb"></span><span class="pc"><svg width="20" height="20" viewBox="-10 -10 20 20" fill="none" stroke="#868a98" stroke-width="2.0" stroke-linecap="round" stroke-linejoin="round"><circle cx="0" cy="0" r="7.45" stroke-width="1.85"/><path d="M0 -3.7 V3.7 M-3.7 0 H3.7" stroke-width="1.85"/></svg></span>
<div class="kw"><a>how to train a dog not to bark at<br>strangers <svg width="15" height="12" viewBox="0 0 15 12" fill="none" class="dbl"><path d="M1.3 1 L6.3 6 L1.3 11 M8 1 L13 6 L8 11" stroke="#868a98" stroke-width="1.8" stroke-linecap="round" stroke-linejoin="round"/></svg></a><span class="pos right">#<i></i>9</span></div>
<div class="ints"><span class="int int-I">I</span></div>
<div class="num vol">50</div>
<div class="num pkd">0</div><span class="dot" style="left:671px;background:#009f81"></span>
<div class="num kd">6</div><span class="dot" style="left:759.75px;background:#009f81"></span>
<div class="num cpc">0.92</div>
<div class="num com">0.35</div>
<span class="sic0"><svg width="20" height="20" viewBox="-10 -10 20 20" fill="none" stroke="#868a98" stroke-width="2.0" stroke-linecap="round" stroke-linejoin="round"><path d="M-8.4 -5.8 H8.4" stroke-width="2.5" stroke-linecap="butt"/><path d="M-7.5 -5.9 V6 H-1.9" stroke-linecap="butt" stroke-linejoin="miter"/><path d="M7.5 -5.9 V-2.2" stroke-linecap="butt"/><circle cx="2.9" cy="2.5" r="2.65" stroke-width="1.9"/><path d="M5 4.6 L7.7 7.2" stroke-width="1.9"/></svg></span><span class="vdiv"></span>
<div class="sics"><span class="sic"><svg width="20" height="20" viewBox="-10 -10 20 20" fill="none" stroke="#868a98" stroke-width="2.0" stroke-linecap="round" stroke-linejoin="round"><path d="M-1.7 -4.4 H-3.4 A4.4 4.4 0 0 0 -3.4 4.4 H-1.7 M1.7 -4.4 H3.4 A4.4 4.4 0 0 1 3.4 4.4 H1.7 M-2.3 0 H2.3"/></svg></span><span class="sic"><svg width="20" height="20" viewBox="-10 -10 20 20" fill="none" stroke="#868a98" stroke-width="2.0" stroke-linecap="round" stroke-linejoin="round"><g transform="translate(0 0.8)"><rect x="-7.75" y="-7.25" width="11.9" height="11" stroke-linejoin="miter"/><path d="M7.2 -4.3 V6.9 H-6.2" stroke-linecap="butt" stroke-linejoin="miter"/><circle cx="-4.6" cy="-4" r="1.15" fill="#868a98" stroke="none"/><path d="M-7.7 1.6 L-5.4 -0.4 L-2.8 2.2 L1.6 -3.4 L4.1 -1.2" stroke-width="1.5"/></g></svg></span><span class="sic"><svg width="20" height="20" viewBox="-10 -10 20 20" fill="none" stroke="#868a98" stroke-width="2.0" stroke-linecap="round" stroke-linejoin="round"><circle cx="0" cy="0" r="6.45"/><path d="M-1.9 -2.6 L2.5 0 L-1.9 2.6 Z" fill="#868a98" stroke-width="1"/></svg></span><span class="sic"><svg width="20" height="20" viewBox="-10 -10 20 20" fill="none" stroke="#868a98" stroke-width="2.0" stroke-linecap="round" stroke-linejoin="round"><path d="M-6.7 -7.85 H6.7 V2.95 H-2.7 L-6.7 6.4 Z" stroke-linejoin="miter"/><text x="0" y="0.4" font-family="Liberation Sans, sans-serif" font-size="8.6" fill="#868a98" stroke="none" text-anchor="middle">?</text></svg></span><span class="sic"><svg width="20" height="20" viewBox="-10 -10 20 20" fill="none" stroke="#868a98" stroke-width="1.8" stroke-linecap="round" stroke-linejoin="round"><path d="M-8.4 -6.3 H-2 M2 -6.3 H8.4"/><path d="M-8.4 -2.1 H-2 M2 -2.1 H8.4"/><path d="M-8.4 2.1 H-2 M2 2.1 H8.4"/><path d="M-8.4 6.3 H-2 M2 6.3 H8.4"/></svg></span></div>
<div class="upd">2 weeks<span class="rf"><svg width="20" height="20" viewBox="-10 -10 20 20" fill="none" stroke="#0066cc" stroke-width="2.05" stroke-linecap="round" stroke-linejoin="round"><path d="M5.44 4.4 A7 7 0 1 1 6.1 -3.4"/><path d="M6.9 -7.5 V-2.1 H1.9"/></svg></span></div>
</div>
<div class="tr" style="top:640.52px;height:71.25px">
<span class="cb"></span><span class="pc"><svg width="20" height="20" viewBox="-10 -10 20 20" fill="none" stroke="#868a98" stroke-width="2.0" stroke-linecap="round" stroke-linejoin="round"><circle cx="0" cy="0" r="7.45" stroke-width="1.85"/><path d="M0 -3.7 V3.7 M-3.7 0 H3.7" stroke-width="1.85"/></svg></span>
<div class="kw"><a>how to train a dog to not bark at<br>strangers <svg width="15" height="12" viewBox="0 0 15 12" fill="none" class="dbl"><path d="M1.3 1 L6.3 6 L1.3 11 M8 1 L13 6 L8 11" stroke="#868a98" stroke-width="1.8" stroke-linecap="round" stroke-linejoin="round"/></svg></a><span class="pos right">#<i></i>8</span></div>
<div class="ints"><span class="int int-I">I</span></div>
<div class="num vol">50</div>
<div class="num pkd">0</div><span class="dot" style="left:671px;background:#009f81"></span>
<div class="num kd">5</div><span class="dot" style="left:759.75px;background:#009f81"></span>
<div class="num cpc">0.92</div>
<div class="num com">0.35</div>
<span class="sic0"><svg width="20" height="20" viewBox="-10 -10 20 20" fill="none" stroke="#868a98" stroke-width="2.0" stroke-linecap="round" stroke-linejoin="round"><path d="M-8.4 -5.8 H8.4" stroke-width="2.5" stroke-linecap="butt"/><path d="M-7.5 -5.9 V6 H-1.9" stroke-linecap="butt" stroke-linejoin="miter"/><path d="M7.5 -5.9 V-2.2" stroke-linecap="butt"/><circle cx="2.9" cy="2.5" r="2.65" stroke-width="1.9"/><path d="M5 4.6 L7.7 7.2" stroke-width="1.9"/></svg></span><span class="vdiv"></span>
<div class="sics"><span class="sic"><svg width="20" height="20" viewBox="-10 -10 20 20" fill="none" stroke="#868a98" stroke-width="2.0" stroke-linecap="round" stroke-linejoin="round"><path d="M-1.7 -4.4 H-3.4 A4.4 4.4 0 0 0 -3.4 4.4 H-1.7 M1.7 -4.4 H3.4 A4.4 4.4 0 0 1 3.4 4.4 H1.7 M-2.3 0 H2.3"/></svg></span><span class="sic"><svg width="20" height="20" viewBox="-10 -10 20 20" fill="none" stroke="#868a98" stroke-width="2.0" stroke-linecap="round" stroke-linejoin="round"><circle cx="0" cy="0" r="6.45"/><path d="M-1.9 -2.6 L2.5 0 L-1.9 2.6 Z" fill="#868a98" stroke-width="1"/></svg></span><span class="sic"><svg width="20" height="20" viewBox="-10 -10 20 20" fill="none" stroke="#868a98" stroke-width="2.0" stroke-linecap="round" stroke-linejoin="round"><path d="M-6.7 -7.85 H6.7 V2.95 H-2.7 L-6.7 6.4 Z" stroke-linejoin="miter"/><text x="0" y="0.4" font-family="Liberation Sans, sans-serif" font-size="8.6" fill="#868a98" stroke="none" text-anchor="middle">?</text></svg></span><span class="sic"><svg width="20" height="20" viewBox="-10 -10 20 20" fill="none" stroke="#868a98" stroke-width="1.8" stroke-linecap="round" stroke-linejoin="round"><path d="M-8.4 -6.3 H-2 M2 -6.3 H8.4"/><path d="M-8.4 -2.1 H-2 M2 -2.1 H8.4"/><path d="M-8.4 2.1 H-2 M2 2.1 H8.4"/><path d="M-8.4 6.3 H-2 M2 6.3 H8.4"/></svg></span></div>
<div class="upd">Last week<span class="rf"><svg width="20" height="20" viewBox="-10 -10 20 20" fill="none" stroke="#0066cc" stroke-width="2.05" stroke-linecap="round" stroke-linejoin="round"><path d="M5.44 4.4 A7 7 0 1 1 6.1 -3.4"/><path d="M6.9 -7.5 V-2.1 H1.9"/></svg></span></div>
</div>
<div class="tr" style="top:711.77px;height:50.19px">
<span class="cb"></span><span class="pc"><svg width="20" height="20" viewBox="-10 -10 20 20" fill="none" stroke="#868a98" stroke-width="2.0" stroke-linecap="round" stroke-linejoin="round"><circle cx="0" cy="0" r="7.45" stroke-width="1.85"/><path d="M0 -3.7 V3.7 M-3.7 0 H3.7" stroke-width="1.85"/></svg></span>
<div class="kw"><a>how to train a ptsd service dog <svg width="15" height="12" viewBox="0 0 15 12" fill="none" class="dbl"><path d="M1.3 1 L6.3 6 L1.3 11 M8 1 L13 6 L8 11" stroke="#868a98" stroke-width="1.8" stroke-linecap="round" stroke-linejoin="round"/></svg></a><span class="pos">#<i></i>7</span></div>
<div class="ints"><span class="int int-I">I</span></div>
<div class="num vol">50</div>
<div class="num pkd">0</div><span class="dot" style="left:671px;background:#009f81"></span>
<div class="num kd">25</div><span class="dot" style="left:759.75px;background:#59ddaa"></span>
<div class="num cpc">1.13</div>
<div class="num com">0.49</div>
<span class="sic0"><svg width="20" height="20" viewBox="-10 -10 20 20" fill="none" stroke="#868a98" stroke-width="2.0" stroke-linecap="round" stroke-linejoin="round"><path d="M-8.4 -5.8 H8.4" stroke-width="2.5" stroke-linecap="butt"/><path d="M-7.5 -5.9 V6 H-1.9" stroke-linecap="butt" stroke-linejoin="miter"/><path d="M7.5 -5.9 V-2.2" stroke-linecap="butt"/><circle cx="2.9" cy="2.5" r="2.65" stroke-width="1.9"/><path d="M5 4.6 L7.7 7.2" stroke-width="1.9"/></svg></span><span class="vdiv"></span>
<div class="sics"><span class="sic"><svg width="20" height="20" viewBox="-10 -10 20 20" fill="none" stroke="#868a98" stroke-width="2.0" stroke-linecap="round" stroke-linejoin="round"><path d="M-1.7 -4.4 H-3.4 A4.4 4.4 0 0 0 -3.4 4.4 H-1.7 M1.7 -4.4 H3.4 A4.4 4.4 0 0 1 3.4 4.4 H1.7 M-2.3 0 H2.3"/></svg></span><span class="sic"><svg width="20" height="20" viewBox="-10 -10 20 20" fill="none" stroke="#868a98" stroke-width="2.0" stroke-linecap="round" stroke-linejoin="round"><path d="M0.00 -7.55 L2.03 -2.54 L7.42 -2.16 L3.28 1.32 L4.58 6.56 L0.00 3.70 L-4.58 6.56 L-3.28 1.32 L-7.42 -2.16 L-2.03 -2.54 Z" stroke-width="1.85"/></svg></span><span class="sic"><svg width="20" height="20" viewBox="-10 -10 20 20" fill="none" stroke="#868a98" stroke-width="2.0" stroke-linecap="round" stroke-linejoin="round"><circle cx="0" cy="0" r="6.45"/><path d="M-1.9 -2.6 L2.5 0 L-1.9 2.6 Z" fill="#868a98" stroke-width="1"/></svg></span><span class="sic"><svg width="20" height="20" viewBox="-10 -10 20 20" fill="none" stroke="#868a98" stroke-width="2.0" stroke-linecap="round" stroke-linejoin="round"><path d="M-6.7 -7.85 H6.7 V2.95 H-2.7 L-6.7 6.4 Z" stroke-linejoin="miter"/><text x="0" y="0.4" font-family="Liberation Sans, sans-serif" font-size="8.6" fill="#868a98" stroke="none" text-anchor="middle">?</text></svg></span><span class="sic"><svg width="20" height="20" viewBox="-10 -10 20 20" fill="none" stroke="#868a98" stroke-width="1.8" stroke-linecap="round" stroke-linejoin="round"><path d="M-8.4 -6.3 H-2 M2 -6.3 H8.4"/><path d="M-8.4 -2.1 H-2 M2 -2.1 H8.4"/><path d="M-8.4 2.1 H-2 M2 2.1 H8.4"/><path d="M-8.4 6.3 H-2 M2 6.3 H8.4"/></svg></span></div>
<div class="upd">4 weeks<span class="rf"><svg width="20" height="20" viewBox="-10 -10 20 20" fill="none" stroke="#0066cc" stroke-width="2.05" stroke-linecap="round" stroke-linejoin="round"><path d="M5.44 4.4 A7 7 0 1 1 6.1 -3.4"/><path d="M6.9 -7.5 V-2.1 H1.9"/></svg></span></div>
</div>
<div class="tr" style="top:761.96px;height:71.25px">
<span class="cb"></span><span class="pc"><svg width="20" height="20" viewBox="-10 -10 20 20" fill="none" stroke="#868a98" stroke-width="2.0" stroke-linecap="round" stroke-linejoin="round"><circle cx="0" cy="0" r="7.45" stroke-width="1.85"/><path d="M0 -3.7 V3.7 M-3.7 0 H3.7" stroke-width="1.85"/></svg></span>
<div class="kw"><a>how to train dog not to bark at<br>strangers <svg width="15" height="12" viewBox="0 0 15 12" fill="none" class="dbl"><path d="M1.3 1 L6.3 6 L1.3 11 M8 1 L13 6 L8 11" stroke="#868a98" stroke-width="1.8" stroke-linecap="round" stroke-linejoin="round"/></svg></a><span class="pos right">#<i></i>8</span></div>
<div class="ints"><span class="int int-I">I</span></div>
<div class="num vol">50</div>
<div class="num pkd">0</div><span class="dot" style="left:671px;background:#009f81"></span>
<div class="num kd">14</div><span class="dot" style="left:759.75px;background:#59ddaa"></span>
<div class="num cpc">0.86</div>
<div class="num com">0.30</div>
<span class="sic0"><svg width="20" height="20" viewBox="-10 -10 20 20" fill="none" stroke="#868a98" stroke-width="2.0" stroke-linecap="round" stroke-linejoin="round"><path d="M-8.4 -5.8 H8.4" stroke-width="2.5" stroke-linecap="butt"/><path d="M-7.5 -5.9 V6 H-1.9" stroke-linecap="butt" stroke-linejoin="miter"/><path d="M7.5 -5.9 V-2.2" stroke-linecap="butt"/><circle cx="2.9" cy="2.5" r="2.65" stroke-width="1.9"/><path d="M5 4.6 L7.7 7.2" stroke-width="1.9"/></svg></span><span class="vdiv"></span>
<div class="sics"><span class="sic"><svg width="20" height="20" viewBox="-10 -10 20 20" fill="none" stroke="#868a98" stroke-width="2.0" stroke-linecap="round" stroke-linejoin="round"><path d="M-7.7 -2.5 L-3.7 0.4 L0 -6 L3.7 0.4 L7.7 -2.5 L5.5 3.7 H-5.5 Z"/><path d="M-4.7 7.9 H4.7"/></svg></span><span class="sic"><svg width="20" height="20" viewBox="-10 -10 20 20" fill="none" stroke="#868a98" stroke-width="2.0" stroke-linecap="round" stroke-linejoin="round"><path d="M-1.7 -4.4 H-3.4 A4.4 4.4 0 0 0 -3.4 4.4 H-1.7 M1.7 -4.4 H3.4 A4.4 4.4 0 0 1 3.4 4.4 H1.7 M-2.3 0 H2.3"/></svg></span><span class="sic"><svg width="20" height="20" viewBox="-10 -10 20 20" fill="none" stroke="#868a98" stroke-width="2.0" stroke-linecap="round" stroke-linejoin="round"><circle cx="0" cy="0" r="6.45"/><path d="M-1.9 -2.6 L2.5 0 L-1.9 2.6 Z" fill="#868a98" stroke-width="1"/></svg></span><span class="sic"><svg width="20" height="20" viewBox="-10 -10 20 20" fill="none" stroke="#868a98" stroke-width="2.0" stroke-linecap="round" stroke-linejoin="round"><path d="M-6.7 -7.85 H6.7 V2.95 H-2.7 L-6.7 6.4 Z" stroke-linejoin="miter"/><text x="0" y="0.4" font-family="Liberation Sans, sans-serif" font-size="8.6" fill="#868a98" stroke="none" text-anchor="middle">?</text></svg></span><span class="sic"><svg width="20" height="20" viewBox="-10 -10 20 20" fill="none" stroke="#868a98" stroke-width="1.8" stroke-linecap="round" stroke-linejoin="round"><path d="M-8.4 -6.3 H-2 M2 -6.3 H8.4"/><path d="M-8.4 -2.1 H-2 M2 -2.1 H8.4"/><path d="M-8.4 2.1 H-2 M2 2.1 H8.4"/><path d="M-8.4 6.3 H-2 M2 6.3 H8.4"/></svg></span></div>
<div class="upd">This week<span class="rf"><svg width="20" height="20" viewBox="-10 -10 20 20" fill="none" stroke="#0066cc" stroke-width="2.05" stroke-linecap="round" stroke-linejoin="round"><path d="M5.44 4.4 A7 7 0 1 1 6.1 -3.4"/><path d="M6.9 -7.5 V-2.1 H1.9"/></svg></span></div>
</div>
</div>
<div id="pk"><i style="left:858.8px;top:295.1px;width:97.4px;height:9px"></i><i style="left:858.8px;top:295.1px;width:8.7px;height:790px"></i><i style="left:947.1px;top:295.1px;width:9.1px;height:790px"></i></div>
<div id="fade"></div>
</body></html>
